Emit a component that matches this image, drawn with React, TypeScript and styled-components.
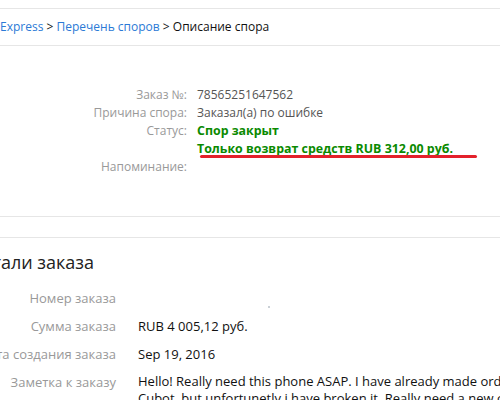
import styled, { createGlobalStyle } from "styled-components";

const GlobalStyle = createGlobalStyle`
  html, body {
    margin: 0;
    padding: 0;
    background: #ffffff;
    overflow: hidden;
  }
  body {
    font-family: "Open Sans", "Noto Sans", "DejaVu Sans", sans-serif;
    color: #333333;
  }
`;

const Page = styled.div`
  width: 500px;
  height: 400px;
  padding-top: 8px;
  box-sizing: border-box;
  overflow: hidden;
`;

const Breadcrumb = styled.nav`
  height: 36px;
  line-height: 36px;
  border-top: 1px solid #e6e6e6;
  border-bottom: 1px solid #e6e6e6;
  font-size: 12px;
  white-space: pre;
  color: #111111;
`;

const Crumb = styled.a`
  color: #2b7ad6;
  text-decoration: none;
`;

const DisputeInfo = styled.dl`
  display: grid;
  grid-template-columns: 187px 1fr;
  column-gap: 10px;
  margin: 0;
  padding: 40px 0 40px;
  font-size: 12px;
  line-height: 18px;
  border-bottom: 1px solid #e6e6e6;
`;

const InfoLabel = styled.dt`
  text-align: right;
  color: #999999;
  white-space: nowrap;
`;

const InfoValue = styled.dd<{ $status?: boolean }>`
  margin: 0;
  white-space: nowrap;
  color: ${(p) => (p.$status ? "#0a8a00" : "#555555")};
  font-weight: ${(p) => (p.$status ? 700 : 400)};
  font-size: ${(p) => (p.$status ? "12.4px" : "12px")};
`;

const Marked = styled.span`
  position: relative;
  &::after {
    content: "";
    position: absolute;
    left: 3px;
    top: 15px;
    width: 277px;
    height: 3px;
    border-radius: 2px;
    background: #e3212b;
  }
`;

const Gap = styled.div`
  height: 20px;
  border-bottom: 1px solid #e6e6e6;
`;

const Details = styled.section`
  padding-top: 12px;
`;

const Heading = styled.h2`
  margin: 0 0 15px -30px;
  font-size: 18px;
  line-height: 24px;
  font-weight: 400;
  color: #222222;
  white-space: nowrap;
`;

const DetailGrid = styled.dl`
  display: grid;
  grid-template-columns: 116px 1fr;
  column-gap: 22px;
  row-gap: 10px;
  margin: 0;
  font-size: 13px;
  line-height: 18px;
`;

const DetailLabel = styled.dt`
  text-align: right;
  color: #999999;
  white-space: nowrap;
  direction: rtl;
`;

const DetailValue = styled.dd<{ $note?: boolean }>`
  margin: 0;
  color: #111111;
  line-height: ${(p) => (p.$note ? "17px" : "18px")};
  white-space: ${(p) => (p.$note ? "normal" : "nowrap")};
  width: ${(p) => (p.$note ? "420px" : "auto")};
  position: relative;
`;

const Blot = styled.span`
  position: absolute;
  left: 130px;
  top: 17px;
  width: 2px;
  height: 2px;
  border-radius: 1px;
  background: #b8c0c8;
`;

export default function App() {
  return (
    <>
      <GlobalStyle />
      <Page>
        <Breadcrumb>
          <Crumb href="#">Express</Crumb>
          {" > "}
          <Crumb href="#">Перечень споров</Crumb>
          {" > "}
          Описание спора
        </Breadcrumb>

        <DisputeInfo>
          <InfoLabel>Заказ №:</InfoLabel>
          <InfoValue>78565251647562</InfoValue>
          <InfoLabel>Причина спора:</InfoLabel>
          <InfoValue>Заказал(а) по ошибке</InfoValue>
          <InfoLabel>Статус:</InfoLabel>
          <InfoValue $status>Спор закрыт</InfoValue>
          <InfoLabel />
          <InfoValue $status>
            <Marked>Только возврат средств RUB 312,00 руб.</Marked>
          </InfoValue>
          <InfoLabel>Напоминание:</InfoLabel>
          <InfoValue />
        </DisputeInfo>

        <Gap />

        <Details>
          <Heading>Детали заказа</Heading>
          <DetailGrid>
            <DetailLabel>Номер заказа</DetailLabel>
            <DetailValue>
              <Blot />
              &nbsp;
            </DetailValue>
            <DetailLabel>Сумма заказа</DetailLabel>
            <DetailValue>RUB 4 005,12 руб.</DetailValue>
            <DetailLabel>Дата создания заказа</DetailLabel>
            <DetailValue>Sep 19, 2016</DetailValue>
            <DetailLabel>Заметка к заказу</DetailLabel>
            <DetailValue $note>
              Hello! Really need this phone ASAP. I have already made order of
              Cubot, but unfortunetly i have broken it. Really need a new one
              as soon as possible.
            </DetailValue>
          </DetailGrid>
        </Details>
      </Page>
    </>
  );
}
